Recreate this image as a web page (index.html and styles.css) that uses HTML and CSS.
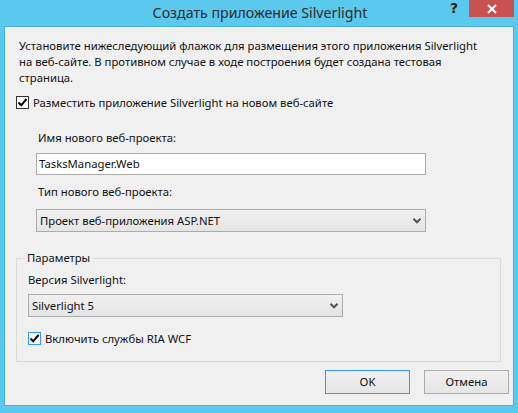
FILE: index.html
```html
<!DOCTYPE html>
<html>
<head>
<meta charset="utf-8">
<link rel="stylesheet" href="styles.css">
</head>
<body>
<div class="window">
  <div class="titlebar">
    <div class="title">Создать приложение Silverlight</div>
    <div class="help">?</div>
    <div class="close">
      <svg width="10" height="10" viewBox="0 0 10 10"><path d="M1 1L9 9M9 1L1 9" stroke="#fff" stroke-width="2"/></svg>
    </div>
  </div>
  <div class="client">
    <p class="intro">Установите нижеследующий флажок для размещения этого приложения Silverlight на веб-сайте. В противном случае в ходе построения будет создана тестовая страница.</p>
    <div class="check-row">
      <span class="box">
        <svg width="11" height="11" viewBox="0 0 11 11"><path d="M1.5 5.5L4.2 8.3L9.5 2" fill="none" stroke="#000" stroke-width="2"/></svg>
      </span>
      <span class="check-label">Разместить приложение Silverlight на новом веб-сайте</span>
    </div>
    <div class="web">
      <div class="field-label">Имя нового веб-проекта:</div>
      <div class="textbox">TasksManager.Web</div>
      <div class="field-label second">Тип нового веб-проекта:</div>
      <div class="combo wide">
        <span>Проект веб-приложения ASP.NET</span>
        <svg class="arrow" width="8" height="6" viewBox="0 0 8 6"><path d="M0.5 0.8L4 4.3L7.5 0.8" fill="none" stroke="#555" stroke-width="2"/></svg>
      </div>
    </div>
    <fieldset class="group">
      <legend>Параметры</legend>
      <div class="field-label ver">Версия Silverlight:</div>
      <div class="combo narrow">
        <span>Silverlight 5</span>
        <svg class="arrow" width="8" height="6" viewBox="0 0 8 6"><path d="M0.5 0.8L4 4.3L7.5 0.8" fill="none" stroke="#555" stroke-width="2"/></svg>
      </div>
      <div class="check-row ria">
        <span class="box focus">
          <svg width="11" height="11" viewBox="0 0 11 11"><path d="M1.5 5.5L4.2 8.3L9.5 2" fill="none" stroke="#000" stroke-width="2"/></svg>
        </span>
        <span class="check-label">Включить службы RIA WCF</span>
      </div>
    </fieldset>
    <div class="buttons">
      <div class="btn default">OK</div>
      <div class="btn">Отмена</div>
    </div>
  </div>
</div>
</body>
</html>
```
FILE: styles.css
```css
html, body {
  margin: 0;
  padding: 0;
}
body {
  width: 518px;
  height: 413px;
  overflow: hidden;
  background: #5bc8ee;
  font-family: "Noto Sans", "Open Sans", sans-serif;
  font-size: 11.3px;
  color: #111;
}
.window {
  width: 518px;
  height: 413px;
  display: flex;
  flex-direction: column;
}
.titlebar {
  height: 26px;
  display: flex;
  align-items: flex-start;
  position: relative;
}
.title {
  flex: 1;
  text-align: center;
  font-size: 14.2px;
  line-height: 26px;
  color: #2b2b2b;
  padding-left: 2px;
}
.help {
  position: absolute;
  left: 450px;
  top: 0;
  font-weight: bold;
  font-size: 14px;
  line-height: 16px;
  color: #222;
  font-family: "DejaVu Sans", sans-serif;
}
.close {
  position: absolute;
  left: 469px;
  top: 0;
  width: 45px;
  height: 17px;
  background: #c75050;
  display: flex;
  align-items: center;
  justify-content: center;
}
.client {
  margin: 0 4px 0 4px;
  height: 378px;
  background: #f0f0f0;
  border: 1px solid #4aafd8;
  padding: 0 14px 0 14px;
  box-sizing: content-box;
  width: 480px;
}
.intro {
  margin: 11px 0 0 0;
  line-height: 16px;
  width: 470px;
}
.check-row {
  display: flex;
  align-items: center;
  margin-top: 9px;
  height: 14px;
}
.box {
  width: 11px;
  height: 11px;
  border: 1px solid #333;
  background: #fff;
  display: flex;
  margin-left: -3px;
}
.box.focus {
  border-color: #3399ff;
}
.check-label {
  margin-left: 4px;
}
.web {
  padding-left: 17px;
  margin-top: 21px;
}
.field-label {
  line-height: 16px;
  padding-left: 2px;
}
.field-label.second {
  margin-top: 9px;
}
.textbox {
  margin-top: 7px;
  height: 20px;
  border: 1px solid #ababab;
  background: #fff;
  line-height: 20px;
  padding-left: 2px;
  box-sizing: content-box;
  width: 386px;
}
.combo {
  margin-top: 9px;
  height: 21px;
  border: 1px solid #acacac;
  background: linear-gradient(#f0f0f0, #e5e5e5);
  display: flex;
  align-items: center;
  justify-content: space-between;
  padding: 0 4px 0 3px;
}
.combo.wide {
  width: 381px;
}
.combo.narrow {
  width: 306px;
  margin-top: 6px;
}
.arrow {
  margin-top: 1px;
}
.group {
  margin: 18px 0 0 -3px;
  padding: 0 0 0 11px;
  width: 485px;
  height: 112px;
  border: 1px solid #dcdcdc;
  box-sizing: border-box;
  min-width: 0;
}
.group legend {
  padding: 0 3px 0 2px;
  margin-left: -3px;
  line-height: 16px;
}
.field-label.ver {
  margin-top: 6px;
  padding-left: 0;
}
.check-row.ria {
  margin-top: 14px;
  padding-left: 3px;
}
.buttons {
  display: flex;
  justify-content: flex-end;
  gap: 14px;
  margin-top: 8px;
  margin-right: -10px;
}
.btn {
  width: 83px;
  height: 22px;
  border: 1px solid #acacac;
  background: linear-gradient(#f0f0f0, #e5e5e5);
  text-align: center;
  line-height: 22px;
}
.btn.default {
  border-color: #3399ff;
}
```
